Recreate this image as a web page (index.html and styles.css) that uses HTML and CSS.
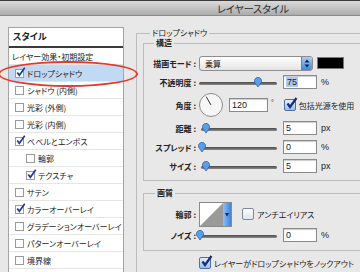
FILE: index.html
```html
<!DOCTYPE html>
<html lang="ja">
<head>
    <meta charset="UTF-8">
    <title>レイヤースタイル</title>
    <link rel="stylesheet" href="styles.css">
</head>
<body>
    <div class="titlebar"><span>レイヤースタイル</span></div>

    <div class="dialog">
        <!-- style list -->
        <div class="sidebar">
            <div class="style-list">
                <div class="list-head">スタイル</div>
                <div class="list-row plain">レイヤー効果・初期設定</div>
                <div class="list-row selected">
                    <span class="cb"><svg class="check" viewBox="0 0 12 12"><path d="M1.5 6.5 L4 10 L10.5 1"/></svg></span>ドロップシャドウ
                </div>
                <div class="list-row"><span class="cb"></span>シャドウ (内側)</div>
                <div class="list-row"><span class="cb"></span>光彩 (外側)</div>
                <div class="list-row"><span class="cb"></span>光彩 (内側)</div>
                <div class="list-row">
                    <span class="cb"><svg class="check" viewBox="0 0 12 12"><path d="M1.5 6.5 L4 10 L10.5 1"/></svg></span>ベベルとエンボス
                </div>
                <div class="list-row sub"><span class="cb"></span>輪郭</div>
                <div class="list-row sub">
                    <span class="cb"><svg class="check" viewBox="0 0 12 12"><path d="M1.5 6.5 L4 10 L10.5 1"/></svg></span>テクスチャ
                </div>
                <div class="list-row"><span class="cb"></span>サテン</div>
                <div class="list-row">
                    <span class="cb"><svg class="check" viewBox="0 0 12 12"><path d="M1.5 6.5 L4 10 L10.5 1"/></svg></span>カラーオーバーレイ
                </div>
                <div class="list-row"><span class="cb"></span>グラデーションオーバーレイ</div>
                <div class="list-row"><span class="cb"></span>パターンオーバーレイ</div>
                <div class="list-row"><span class="cb"></span>境界線</div>
            </div>
        </div>

        <!-- settings -->
        <div class="settings">
            <fieldset class="group outer">
                <legend>ドロップシャドウ</legend>

                <fieldset class="group inner">
                    <legend>構造</legend>
                    <div class="form-grid">
                        <label>描画モード :</label>
                        <div class="control">
                            <div class="select">
                                <span>乗算</span>
                                <span class="stepper">
                                    <svg viewBox="0 0 10 13"><path d="M5 2.5 L7.5 5.5 L2.5 5.5 Z M5 10.5 L7.5 7.5 L2.5 7.5 Z"/></svg>
                                </span>
                            </div>
                            <span class="swatch"></span>
                        </div>

                        <label>不透明度 :</label>
                        <div class="control">
                            <div class="slider"><span class="track"></span><svg class="thumb" style="left:55px" viewBox="0 0 8 10"><path d="M4 10 L0.8 5.6 A3.6 3.6 0 1 1 7.2 5.6 Z"/></svg></div>
                            <span class="num"><span class="sel">75</span></span>
                            <span class="unit">%</span>
                        </div>

                        <label>角度 :</label>
                        <div class="control">
                            <svg class="dial" viewBox="0 0 24 24">
                                <circle cx="12" cy="12" r="11.5"/>
                                <line x1="12" y1="12" x2="7.2" y2="3.7"/>
                            </svg>
                            <span class="num wide">120</span>
                            <span class="unit deg">°</span>
                            <span class="cb-lg on"><svg class="check" viewBox="0 0 12 12"><path d="M1.5 6.5 L4 10 L10.5 1"/></svg></span>
                            <span class="cb-text">包括光源を使用</span>
                        </div>

                        <label>距離 :</label>
                        <div class="control">
                            <div class="slider short"><span class="track"></span><svg class="thumb" style="left:1px" viewBox="0 0 8 10"><path d="M4 10 L0.8 5.6 A3.6 3.6 0 1 1 7.2 5.6 Z"/></svg></div>
                            <span class="num">5</span>
                            <span class="unit">px</span>
                        </div>

                        <label>スプレッド :</label>
                        <div class="control">
                            <div class="slider short"><span class="track"></span><svg class="thumb" style="left:-3px" viewBox="0 0 8 10"><path d="M4 10 L0.8 5.6 A3.6 3.6 0 1 1 7.2 5.6 Z"/></svg></div>
                            <span class="num">0</span>
                            <span class="unit">%</span>
                        </div>

                        <label>サイズ :</label>
                        <div class="control">
                            <div class="slider short"><span class="track"></span><svg class="thumb" style="left:1px" viewBox="0 0 8 10"><path d="M4 10 L0.8 5.6 A3.6 3.6 0 1 1 7.2 5.6 Z"/></svg></div>
                            <span class="num">5</span>
                            <span class="unit">px</span>
                        </div>
                    </div>
                </fieldset>

                <fieldset class="group inner quality">
                    <legend>画質</legend>
                    <div class="form-grid small">
                        <label>輪郭 :</label>
                        <div class="control">
                            <div class="contour">
                                <svg class="curve" viewBox="0 0 23 23"><rect width="23" height="23" fill="#fff"/><path d="M0 23 L23 0 L23 23 Z" fill="#9a9a9a"/></svg>
                                <span class="drop">
                                    <svg viewBox="0 0 7 23"><path d="M1.5 10 L5.5 10 L3.5 13.5 Z"/></svg>
                                </span>
                            </div>
                            <span class="cb-lg"></span>
                            <span class="cb-text">アンチエイリアス</span>
                        </div>

                        <label>ノイズ :</label>
                        <div class="control">
                            <div class="slider"><span class="track"></span><svg class="thumb" style="left:-3px" viewBox="0 0 8 10"><path d="M4 10 L0.8 5.6 A3.6 3.6 0 1 1 7.2 5.6 Z"/></svg></div>
                            <span class="num">0</span>
                            <span class="unit">%</span>
                        </div>
                    </div>
                </fieldset>

                <div class="knockout">
                    <span class="cb-lg on"><svg class="check" viewBox="0 0 12 12"><path d="M1.5 6.5 L4 10 L10.5 1"/></svg></span>
                    <span class="cb-text">レイヤーがドロップシャドウをノックアウト</span>
                </div>
            </fieldset>
        </div>
    </div>

    <!-- red marker drawn over the list -->
    <div class="ring"></div>
</body>
</html>
```

FILE: styles.css
```css
html {
    overflow: hidden;
}

body {
    margin: 0;
    width: 360px;
    height: 272px;
    overflow: hidden;
    position: relative;
    background-color: #e8e8e8;
    font-family: "Noto Sans CJK JP", sans-serif;
    font-size: 8px;
    font-feature-settings: "palt";
    color: #222;
}

.titlebar {
    height: 14px;
    border-top: 1px solid #3a3a3a;
    border-bottom: 1px solid #8c8c8c;
    background: linear-gradient(#dadada, #acacac);
    display: flex;
    align-items: center;
    justify-content: center;
    padding-left: 146px;
    font-size: 10px;
    color: #2a2a2a;
}

.dialog {
    display: flex;
}

/* left list */
.sidebar {
    padding: 11px 0 0 8px;
    width: 116px;
    flex-shrink: 0;
}

.style-list {
    background: #fff;
    border: 1px solid #a4a4a4;
    border-bottom: none;
    height: 244px;
    overflow: hidden;
}

.list-head {
    height: 18px;
    line-height: 18px;
    padding-left: 4px;
    font-size: 9px;
    font-weight: bold;
    border-bottom: 2px solid #3a3a3a;
}

.list-row {
    height: 16px;
    display: flex;
    align-items: center;
    gap: 3px;
    padding-left: 6px;
    border-bottom: 1px solid #e6e6e6;
    white-space: nowrap;
}

.list-row.plain {
    padding-left: 3px;
}

.list-row.sub {
    padding-left: 17px;
}

.list-row.selected {
    background-color: #c2d9f4;
}

.cb {
    width: 7px;
    height: 7px;
    border: 1px solid #9a9a9a;
    background: #fff;
    position: relative;
    flex-shrink: 0;
}

.check {
    position: absolute;
    left: 0;
    top: -3px;
    width: 10px;
    height: 10px;
    fill: none;
    stroke: #1d3c8f;
    stroke-width: 2;
}

/* right side */
.settings {
    padding: 12px 0 0 12px;
}

fieldset.group {
    margin: 0;
    border: 1px solid #bcbcbc;
    min-width: 0;
    box-sizing: border-box;
}

fieldset.outer {
    width: 224px;
    height: 244px;
    padding: 0 0 0 6px;
    border-right: none;
    border-bottom: none;
}

fieldset.group legend {
    padding: 0 2px;
    line-height: 10px;
    margin-left: 7px;
}

fieldset.inner {
    width: 217px;
    padding: 7px 0 6px 3px;
    border-right: none;
}

fieldset.inner legend {
    font-weight: bold;
}

fieldset.quality {
    margin-top: 7px;
    padding: 4px 0 7px 3px;
}

fieldset.quality legend {
    margin-left: 8px;
}

.form-grid {
    display: grid;
    grid-template-columns: 49px auto;
    grid-template-rows: 16px 16px 24px 16px 16px 16px;
    column-gap: 3px;
    row-gap: 3px;
    align-items: center;
}

.form-grid.small {
    grid-template-rows: 24px 16px;
    row-gap: 1px;
}

.form-grid label {
    text-align: right;
    font-weight: bold;
    white-space: nowrap;
}

.control {
    display: flex;
    align-items: center;
}

.select {
    width: 107px;
    height: 13px;
    padding-left: 5px;
    border: 1px solid #8e8e8e;
    border-radius: 3px;
    background: linear-gradient(#fff, #e4e4e4);
    display: flex;
    align-items: center;
    justify-content: space-between;
    overflow: hidden;
}

.stepper {
    width: 10px;
    height: 13px;
    background: linear-gradient(#a9cff6, #3f86dc);
    border-left: 1px solid #5d86bb;
}

.stepper svg {
    width: 10px;
    height: 13px;
    display: block;
    fill: #142447;
}

.swatch {
    width: 25px;
    height: 10px;
    margin-left: 4px;
    background: #000;
    border: 1px solid #777;
}

.slider {
    position: relative;
    width: 78px;
    height: 10px;
}

.slider.short {
    width: 76px;
    margin-left: 2px;
}

.track {
    position: absolute;
    left: 0;
    right: 0;
    top: 5px;
    height: 3px;
    border-radius: 2px;
    background: linear-gradient(#4a4a4a, #8a8a8a);
}

.thumb {
    position: absolute;
    top: 0;
    width: 8px;
    height: 10px;
    fill: #5a9ee8;
    stroke: #2b5ca3;
    stroke-width: 0.7;
}

.num {
    width: 30px;
    height: 12px;
    margin-left: 6px;
    padding-left: 2px;
    border: 1px solid #8a8a8a;
    background: #fff;
    box-shadow: inset 0 1px 1px rgba(0, 0, 0, 0.2);
    font-family: "Liberation Sans", sans-serif;
    font-size: 9px;
    line-height: 12px;
}

.num.wide {
    width: 35px;
}

.num .sel {
    background-color: #a8c9f2;
    padding: 0 1px;
}

.unit {
    margin-left: 4px;
    font-family: "Liberation Sans", sans-serif;
    font-size: 9px;
}

.unit.deg {
    margin-left: 3px;
    font-size: 7px;
    align-self: flex-start;
    margin-top: 6px;
}

.dial {
    width: 24px;
    height: 24px;
    fill: #f6f6f6;
    stroke: #8a8a8a;
    stroke-width: 1;
}

.dial line {
    stroke: #333;
    stroke-width: 1;
}

.cb-lg {
    position: relative;
    width: 10px;
    height: 10px;
    margin-left: 10px;
    border: 1px solid #7a889c;
    border-radius: 2px;
    background: linear-gradient(#fff, #dde4ec);
    flex-shrink: 0;
}

.cb-lg.on {
    background: linear-gradient(#e6f0fc, #98bfee);
    border-color: #4d6fa3;
}

.cb-lg .check {
    left: 1px;
    top: -3px;
    width: 12px;
    height: 12px;
    stroke: #152f7a;
    stroke-width: 2.2;
}

.cb-text {
    margin-left: 3px;
    white-space: nowrap;
}

.contour {
    display: flex;
    width: 31px;
    height: 23px;
    border: 1px solid #8a8a8a;
}

.curve {
    width: 23px;
    height: 23px;
    display: block;
}

.drop {
    width: 8px;
    background: linear-gradient(90deg, #8fc0f4, #3d85da);
}

.drop svg {
    width: 8px;
    height: 23px;
    display: block;
    fill: #142447;
}

.knockout {
    display: flex;
    align-items: center;
    height: 16px;
    padding: 4px 0 0 46px;
}

/* hand-drawn marker ring */
.ring {
    position: absolute;
    left: -2px;
    top: 61px;
    width: 136px;
    height: 22px;
    border: 2px solid #e2392a;
    border-radius: 50%;
}
```
